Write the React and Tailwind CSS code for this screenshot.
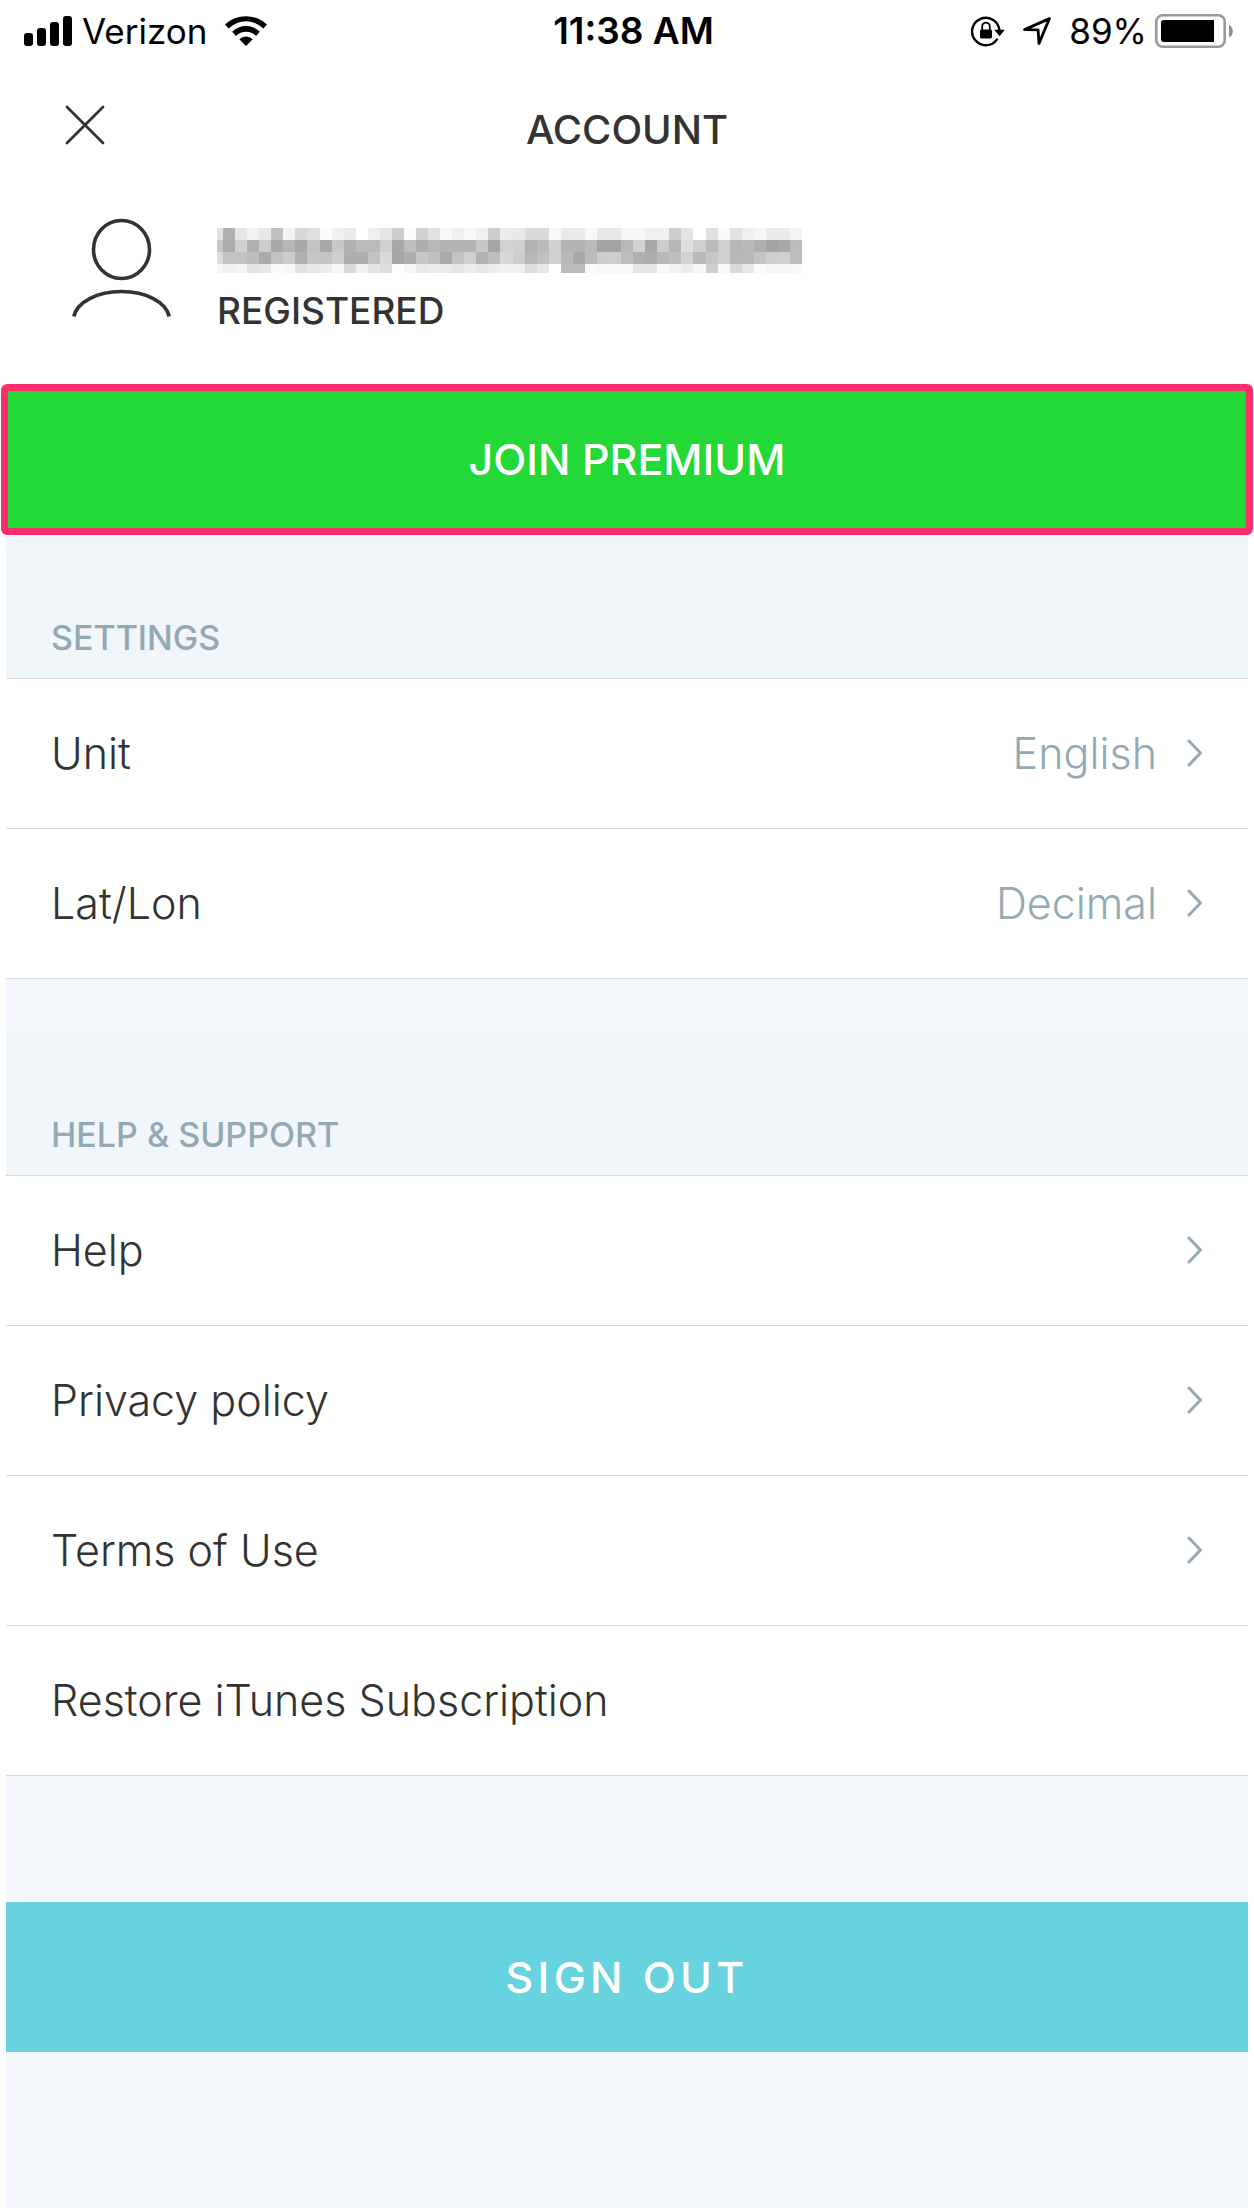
const MOSAIC = [
  "e0 b0 e6 f2 e8 c0 f4 d8 de fc f0 ea ff f0 e6 cc fb d0 e2 f8 f0 f8 f0 cc ec e8 da da f8 ea ea f8 e8 e8 f6 f6 f0 f0 cc e4 ff e0 fa e2 f0 f6 ea ea f4",
  "c6 ac d0 b0 cc a8 b6 a8 c2 a8 c8 b0 bb bb d0 a8 bd ae b8 b4 b4 b4 c8 a6 d2 d0 b2 ba d0 b4 b4 ba a4 a4 b8 d2 a8 cc b6 e0 d0 ba d0 b6 ba b0 a4 a8 bc",
  "da c2 c2 bc aa c2 cc b0 c6 c4 ce ae ae c2 da a6 ae c8 c0 aa c2 d0 b2 be d8 ce b8 c0 d0 b8 a8 bc cc ce be b0 ac b8 be d2 ba c6 d0 b8 b8 c4 ce d0 be",
  "f6 f0 f4 e4 e8 fa f8 e2 e8 ec f6 da f0 e4 dc fe f6 ea ec ec e6 ee e8 ee f0 f0 dc e8 ff bc bc fa f8 f8 f8 e6 e6 fa f2 ec f6 d0 f8 da e8 fa f6 f6 f8",
].map((row) => row.split(" "));

function SignalIcon() {
  return (
    <svg className="h-[30px] w-12 shrink-0" viewBox="0 0 48 30" aria-hidden="true">
      <rect x="0" y="17" width="9" height="13" rx="3" />
      <rect x="13" y="12" width="9" height="18" rx="3" />
      <rect x="26" y="6" width="9" height="24" rx="3" />
      <rect x="39" y="0" width="9" height="30" rx="3" />
    </svg>
  );
}

function WifiIcon() {
  return (
    <svg className="h-[30px] w-[42px] shrink-0" viewBox="0 0 42 30" aria-hidden="true">
      <path d="M0 8.6a30.4 30.4 0 0 1 42 0l-3.6 3.8a25 25 0 0 0-34.8 0z" />
      <path d="M7.2 15.7a19.8 19.8 0 0 1 27.6 0l-3.8 4.2a14.4 14.4 0 0 0-20 0z" />
      <path d="M14.3 23.2a9.7 9.7 0 0 1 13.4 0L21 30z" />
    </svg>
  );
}

function RotationLockIcon() {
  return (
    <svg className="h-8 w-[34px] shrink-0" viewBox="0 0 34 32" aria-hidden="true">
      <path d="M26 24.400A13.700 13.700 0 1 1 28.400 15" fill="none" stroke="#000" strokeWidth="2.400" strokeLinecap="round" />
      <path d="M23.200 14.800h10.600l-5.200 6.400z" />
      <rect x="9" y="14.500" width="12" height="9" rx="1.400" />
      <path d="M11.200 15v-3.600a3.800 3.800 0 0 1 7.600 0V15" fill="none" stroke="#000" strokeWidth="1.800" />
    </svg>
  );
}

function LocationIcon() {
  return (
    <svg className="h-7 w-7 shrink-0" viewBox="0 0 28 28" aria-hidden="true">
      <path d="M1.600 12.600 26.400 1.600 16 26.400l-.9-13.500z" fill="none" stroke="#000" strokeWidth="2.800" strokeLinejoin="round" />
    </svg>
  );
}

function BatteryIcon() {
  return (
    <svg className="h-[34px] w-[78px] shrink-0" viewBox="0 0 78 34" aria-hidden="true">
      <rect x="1.300" y="1.300" width="68.400" height="31.400" rx="6.500" fill="none" stroke="#999" strokeWidth="2.600" />
      <path d="M9 6h50v22H9a3 3 0 0 1-3-3V9a3 3 0 0 1 3-3z" />
      <path d="M74 11c5 2.200 5 10.300 0 12.500z" fill="#8e8e8e" />
    </svg>
  );
}

function Chevron() {
  return (
    <svg className="h-7 w-4 shrink-0" viewBox="0 0 16 28" fill="none" stroke="#93a9b4" strokeWidth="3" strokeLinecap="round" strokeLinejoin="round" aria-hidden="true">
      <path d="M2 2l11.500 12L2 26" />
    </svg>
  );
}

function HiddenEmail() {
  return (
    <svg className="h-[45px] w-[585px]" viewBox="0 0 582 45" preserveAspectRatio="none" shapeRendering="crispEdges" role="img" aria-label="Hidden email address">
      {MOSAIC.map((row, r) =>
        row.map((v, c) => (
          <rect
            key={`${r}-${c}`}
            x={c === 0 ? 0 : 12 * c - 6}
            y={r * 12}
            width={c === 0 ? 6 : 12}
            height={r === 3 ? 9 : 12}
            fill={`#${v}${v}${v}`}
          />
        ))
      )}
    </svg>
  );
}

function SectionHeader({ children }) {
  return (
    <h2 className="flex h-36 items-end border-b border-[#d3dade] bg-[#f0f6f9] pb-5 pl-[45px] text-[34px] leading-10 font-medium text-[#93a9b4]">
      {children}
    </h2>
  );
}

function Row({ label, value, chevron = true }) {
  return (
    <li className="border-b border-[#d6d9db]">
      <button type="button" className="flex h-[149px] w-full items-center justify-between bg-white pr-[45px] pb-0.5 pl-[45px] text-left text-[43px] leading-12 font-light">
        <span>{label}</span>
        <span className="flex items-center gap-[30px] text-[#93a9b4]">
          {value && <span>{value}</span>}
          {chevron && <Chevron />}
        </span>
      </button>
    </li>
  );
}

export default function App() {
  return (
    <div className="flex min-h-screen flex-col bg-white font-['Inter',sans-serif] text-[#333]">
      <div className="grid h-[61px] grid-cols-[1fr_auto_1fr] items-center pr-[21px] pl-6 text-[35px] leading-10 text-black">
        <div className="flex items-center gap-2.5">
          <SignalIcon />
          <span>Verizon</span>
          <span className="pl-2"><WifiIcon /></span>
        </div>
        <time className="pl-2.5 text-[37px] font-semibold">11:38 AM</time>
        <div className="flex items-center justify-end gap-2">
          <RotationLockIcon />
          <span className="px-2.5"><LocationIcon /></span>
          <span>89%</span>
          <BatteryIcon />
        </div>
      </div>

      <header className="grid h-[139px] grid-cols-[1fr_auto_1fr] items-start px-[65px] pt-11">
        <button type="button" aria-label="Close" className="w-10">
          <svg className="size-10" viewBox="0 0 40 40" stroke="#333" strokeWidth="2.800" strokeLinecap="round">
            <path d="M2 2l36 36M38 2 2 38" />
          </svg>
        </button>
        <h1 className="text-[40px] leading-[50px] font-medium">ACCOUNT</h1>
      </header>

      <section className="flex h-[184px] items-start gap-[45px] pt-[18px] pl-[72px]">
        <svg className="h-[100px] w-[100px] shrink-0" viewBox="0 0 100 100" fill="none" stroke="#333" strokeWidth="3.600" aria-hidden="true">
          <ellipse cx="49.500" cy="31.500" rx="28" ry="29" />
          <path d="M1.800 98.500C5 84 25 73.500 49.500 73.500S94 84 97.200 98.500" />
        </svg>
        <div className="pt-2.5">
          <HiddenEmail />
          <p className="pt-[18px] text-[37px] leading-10 font-medium">REGISTERED</p>
        </div>
      </section>

      <button type="button" className="mx-px h-[151px] rounded-md border-7 border-[#ff2d6c] bg-[#22d937] pb-0.5 text-[43px] leading-12 font-medium text-white">
        JOIN PREMIUM
      </button>

      <main className="mx-1.5 flex grow flex-col bg-[#f4f7fb]">
        <SectionHeader>SETTINGS</SectionHeader>
        <ul>
          <Row label="Unit" value="English" />
          <Row label="Lat/Lon" value="Decimal" />
        </ul>
        <div className="pt-[53px]">
          <SectionHeader>HELP &amp; SUPPORT</SectionHeader>
        </div>
        <ul>
          <Row label="Help" />
          <Row label="Privacy policy" />
          <Row label="Terms of Use" />
          <Row label="Restore iTunes Subscription" chevron={false} />
        </ul>
        <button type="button" className="mt-[126px] h-[150px] bg-[#67d3df] text-[43px] leading-12 font-medium tracking-widest text-white">
          SIGN OUT
        </button>
      </main>
    </div>
  );
}
